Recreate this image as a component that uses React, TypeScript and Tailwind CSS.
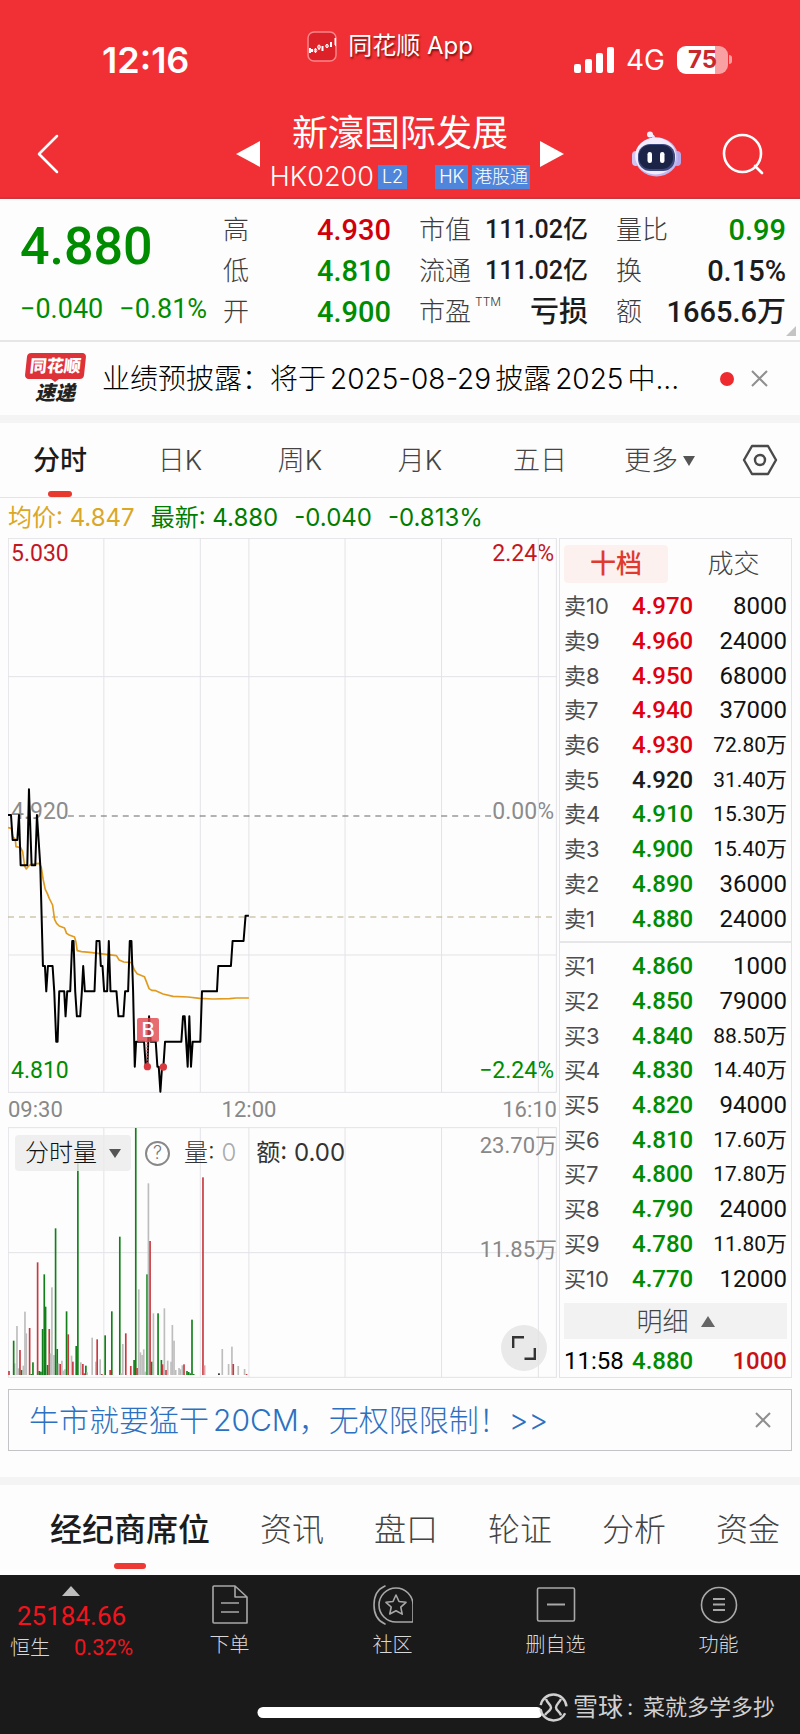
import React from 'react';

const quoteColumns = [
  [
    { label: '高', value: '4.930', color: 'text-[#d0000b]' },
    { label: '低', value: '4.810', color: 'text-[#008c00]' },
    { label: '开', value: '4.900', color: 'text-[#008c00]' },
  ],
  [
    { label: '市值', value: '111.02亿', color: 'text-[#1c1c1c]', small: true },
    { label: '流通', value: '111.02亿', color: 'text-[#1c1c1c]', small: true },
    { label: '市盈', sup: 'TTM', value: '亏损', color: 'text-[#1c1c1c]' },
  ],
  [
    { label: '量比', value: '0.99', color: 'text-[#008c00]' },
    { label: '换', value: '0.15%', color: 'text-[#1c1c1c]' },
    { label: '额', value: '1665.6万', color: 'text-[#1c1c1c]' },
  ],
];

const periods = ['分时', '日K', '周K', '月K', '五日', '更多'];

const sells = [
  ['卖10', '4.970', '8000'],
  ['卖9', '4.960', '24000'],
  ['卖8', '4.950', '68000'],
  ['卖7', '4.940', '37000'],
  ['卖6', '4.930', '72.80万'],
  ['卖5', '4.920', '31.40万'],
  ['卖4', '4.910', '15.30万'],
  ['卖3', '4.900', '15.40万'],
  ['卖2', '4.890', '36000'],
  ['卖1', '4.880', '24000'],
];

const buys = [
  ['买1', '4.860', '1000'],
  ['买2', '4.850', '79000'],
  ['买3', '4.840', '88.50万'],
  ['买4', '4.830', '14.40万'],
  ['买5', '4.820', '94000'],
  ['买6', '4.810', '17.60万'],
  ['买7', '4.800', '17.80万'],
  ['买8', '4.790', '24000'],
  ['买9', '4.780', '11.80万'],
  ['买10', '4.770', '12000'],
];

const priceLine =
  '24,165 33,165 38,240 52,240 57,165 62,316 82,316 87,88 95,316 106,316 111,165 121,316 129,618 135,618 139,694 144,618 158,618 163,694 169,845 173,845 178,694 193,694 197,769 202,694 211,694 217,543 221,543 226,694 231,769 241,769 246,694 250,618 255,694 284,694 290,543 299,543 303,618 308,618 313,694 322,694 327,543 332,694 350,694 356,769 371,769 376,694 385,694 390,543 395,543 400,694 405,920 409,845 433,845 438,920 443,920 448,769 453,845 468,845 473,920 477,920 482,995 487,920 491,920 496,845 545,845 550,769 555,769 564,920 569,769 574,920 579,845 602,845 607,694 652,694 656,618 694,618 699,543 732,543 738,467 748,467';

const averageLine =
  '24,203 34,205 38,230 46,238 48,260 62,263 68,275 74,318 79,327 86,318 95,312 118,310 124,322 130,360 136,388 142,400 148,415 158,435 164,478 170,490 178,498 194,504 200,520 208,525 224,531 228,545 232,572 245,575 270,577 300,581 350,587 358,600 372,606 395,608 404,630 412,641 434,650 448,686 456,691 468,692 490,702 520,709 565,711 600,715 640,717 690,716 710,714 748,714';

// [x, top, colour]
const volumes: [number, number, string][] = [
  [27, 813, 'r'], [44, 790, 'n'], [41, 722, 'g'], [51, 678, 'n'], [55, 805, 'n'], [60, 750, 'r'], [65, 810, 'g'],
  [70, 797, 'n'], [75, 635, 'n'], [79, 700, 'n'], [89, 684, 'r'], [94, 822, 'g'], [99, 787, 'g'], [113, 487, 'r'],
  [118, 813, 'g'], [123, 815, 'g'], [128, 687, 'g'], [137, 620, 'g'], [133, 523, 'g'], [143, 795, 'g'], [148, 687, 'r'],
  [152, 760, 'n'], [156, 562, 'n'], [162, 765, 'n'], [167, 385, 'g'], [172, 747, 'g'], [176, 790, 'n'], [181, 792, 'r'],
  [186, 782, 'n'], [190, 812, 'n'], [195, 808, 'n'], [200, 634, 'g'], [205, 703, 'r'], [215, 767, 'n'], [219, 785, 'r'],
  [229, 738, 'g'], [234, 190, 'g'], [243, 787, 'n'], [249, 792, 'r'], [253, 820, 'r'], [258, 797, 'g'], [262, 817, 'n'],
  [277, 713, 'n'], [288, 785, 'n'], [292, 718, 'r'], [301, 778, 'n'], [306, 822, 'r'], [316, 706, 'g'], [331, 810, 'r'],
  [336, 634, 'g'], [360, 410, 'g'], [364, 820, 'n'], [369, 732, 'n'], [378, 700, 'r'], [393, 798, 'r'], [403, 780, 'g'],
  [408, 84, 'g'], [412, 804, 'r'], [417, 568, 'n'], [422, 757, 'n'], [427, 765, 'n'], [432, 748, 'n'], [436, 815, 'n'],
  [442, 523, 'g'], [446, 250, 'n'], [451, 423, 'r'], [456, 785, 'g'], [461, 640, 'n'], [475, 640, 'g'], [485, 780, 'g'],
  [489, 793, 'r'], [494, 625, 'n'], [499, 810, 'r'], [504, 782, 'n'], [514, 785, 'n'], [518, 675, 'n'], [523, 722, 'n'],
  [528, 810, 'n'], [538, 804, 'n'], [542, 808, 'n'], [548, 796, 'n'], [553, 793, 'r'], [562, 813, 'g'], [567, 816, 'g'],
  [572, 820, 'g'], [577, 659, 'g'], [582, 822, 'g'], [610, 232, 'r'], [615, 796, 'p'], [658, 820, 'k'], [668, 747, 'n'],
  [687, 792, 'n'], [697, 740, 'n'], [701, 792, 'r'], [716, 798, 'n'], [735, 807, 'n'], [741, 822, 'r'],
];

const barColors: Record<string, string> = {
  r: '#c93a40',
  g: '#11801a',
  n: '#bdbdbd',
  p: '#e3a0a4',
  k: '#222222',
};

const gridX = [312, 602, 748, 1037, 1327, 1618];

const priceColor = (price: string) => {
  if (Number(price) > 4.92) return 'text-[#e00010]';
  if (Number(price) < 4.92) return 'text-[#008c00]';
  return 'text-[#1c1c1c]';
};

const StatusBar: React.FC = () => (
  <div className="relative flex h-[111px] items-center justify-between pt-2 pl-[102px] pr-[68px]">
    <span className="text-4xl leading-10 font-semibold">12:16</span>
    <div className="absolute inset-x-0 top-[30px] flex items-center justify-center gap-[10px] pr-5">
      <svg className="size-[31px]" viewBox="0 0 31 31" fill="none">
        <rect x="1" y="1" width="28" height="29" rx="6" fill="#dc2228" stroke="#f7868a" strokeWidth="1.5" />
        <g fill="#fff" stroke="#fff">
          <path d="M3 17v5M5 18v3M15.500 15v5M24 11v5" strokeWidth="2" />
          <path d="M8.500 17v5M12 14v5M20 13v4M28 7v7" strokeWidth="1" />
        </g>
        <ellipse cx="8.500" cy="19.500" rx="1.300" ry="1.800" stroke="#fff" />
        <ellipse cx="12" cy="16" rx="1.300" ry="2" stroke="#fff" />
        <ellipse cx="20" cy="15" rx="1.300" ry="1.600" stroke="#fff" />
        <path d="M28.500 7v8" stroke="#fff" />
      </svg>
      <span className="text-2xl leading-8 font-normal [text-shadow:1px_2px_2px_rgba(80,0,0,0.7)]">同花顺 App</span>
    </div>
    <div className="flex items-center gap-3">
      <svg className="h-[26px] w-[40px]" viewBox="0 0 40 26" fill="#fff">
        <rect x="0" y="17" width="7" height="9" rx="2" />
        <rect x="11" y="12" width="7" height="14" rx="2" />
        <rect x="22" y="6" width="7" height="20" rx="2" />
        <rect x="33" y="0" width="7" height="26" rx="2" />
      </svg>
      <span className="text-[28px] leading-8 font-normal">4G</span>
      <div className="flex items-center gap-px">
        <div className="flex h-7 w-[51px] items-center justify-center rounded-[9px] bg-linear-to-r from-white from-75% to-[#f9a0a3] to-75% text-2xl font-bold text-[#c8282d]">
          75
        </div>
        <span className="h-[9px] w-[3px] rounded-r-full bg-[#f9a0a3]" />
      </div>
    </div>
  </div>
);

const Robot: React.FC = () => (
  <svg className="h-[46px] w-[49px]" viewBox="0 0 49 46">
    <path d="M22 9c0-4-1-5-4-5" stroke="#e6dcf8" strokeWidth="3" fill="none" />
    <circle cx="18" cy="3.500" r="3" fill="#f7eefc" />
    <rect x="0" y="20" width="8" height="15" rx="4" fill="#cfc5f2" />
    <rect x="41" y="20" width="8" height="15" rx="4" fill="#b6a9ea" />
    <ellipse cx="24.500" cy="26" rx="21.500" ry="19.500" fill="#c3b7ef" />
    <ellipse cx="23.500" cy="25" rx="20.500" ry="18.500" fill="#f2ecfc" />
    <rect x="6" y="13" width="37" height="27" rx="12" fill="#3d4a80" />
    <rect x="7" y="14" width="34" height="24" rx="11" fill="#1b2347" />
    <rect x="15.500" y="21" width="4.500" height="11" rx="2.200" fill="#fff" />
    <rect x="28" y="21" width="4.500" height="11" rx="2.200" fill="#fff" />
  </svg>
);

const StockHeader: React.FC = () => (
  <div className="grid h-[88px] grid-cols-[1fr_auto_1fr] items-center border-b-2 border-[#c8383c] px-9">
    <button aria-label="返回" className="justify-self-start">
      <svg className="h-10 w-6" viewBox="0 0 24 40" fill="none" stroke="#fff" strokeWidth="2.500" strokeLinecap="round" strokeLinejoin="round">
        <path d="M21 2 3 20l18 18" />
      </svg>
    </button>
    <div className="flex items-center gap-[10px]">
      <button aria-label="上一只">
        <svg className="h-[26px] w-6" viewBox="0 0 24 26" fill="#fff"><path d="M0 13 24 0v26z" /></svg>
      </button>
      <div className="pb-2">
        <h1 className="text-center text-4xl leading-[44px] font-normal">新濠国际发展</h1>
        <div className="mt-[10px] flex h-6 items-center">
          <span className="text-[27px] leading-6">HK0200</span>
          <span className="ml-1 bg-[#4f86db] px-1 text-lg leading-6">L2</span>
          <span className="ml-7 bg-[#4f86db] px-1 text-lg leading-6">HK</span>
          <span className="ml-1 bg-[#4f86db] px-[2px] text-lg leading-6">港股通</span>
        </div>
      </div>
      <button aria-label="下一只">
        <svg className="h-[26px] w-6" viewBox="0 0 24 26" fill="#fff"><path d="M24 13 0 0v26z" /></svg>
      </button>
    </div>
    <div className="flex items-center gap-[41px] justify-self-end">
      <button aria-label="智能助手"><Robot /></button>
      <button aria-label="搜索">
        <svg className="size-[42px]" viewBox="0 0 42 42" fill="none" stroke="#fff" strokeWidth="2.600" strokeLinecap="round">
          <circle cx="20.500" cy="20.500" r="18.500" />
          <path d="m33 33 7 7" />
        </svg>
      </button>
    </div>
  </div>
);

const QuotePanel: React.FC = () => (
  <section className="relative grid h-[143px] grid-cols-[203fr_196fr_197fr_170fr] border-b-2 border-[#e6e6e6] pl-5 pr-[14px] pt-[10px]">
    <div className="font-[Roboto] font-medium whitespace-nowrap text-[#008c00]">
      <p className="mt-2 text-[52px] leading-[60px]">4.880</p>
      <p className="mt-3 flex gap-4 text-[27px] leading-10 font-normal">
        <span>−0.040</span>
        <span>−0.81%</span>
      </p>
    </div>
    {quoteColumns.map((column, index) => (
      <dl key={index} className="pr-7 last-of-type:pr-0">
        {column.map((item) => (
          <div key={item.label} className="flex h-[41px] items-center justify-between whitespace-nowrap">
            <dt className="flex text-[26px] leading-10 font-light text-[#3c3c3c]">
              {item.label}
              {'sup' in item && <span className="ml-1 text-xs leading-5">TTM</span>}
            </dt>
            <dd
              className={`font-[Roboto,'Noto_Sans_CJK_SC',sans-serif] leading-10 font-medium ${item.color} ${
                'small' in item ? 'text-[25px]' : 'text-[29px]'
              }`}
            >
              {item.value}
            </dd>
          </div>
        ))}
      </dl>
    ))}
    <svg className="absolute right-1 bottom-1 size-[10px]" viewBox="0 0 10 10" fill="#c4c4c4"><path d="M10 0v10H0z" /></svg>
  </section>
);

const NewsBar: React.FC = () => (
  <section className="flex h-[81px] items-center border-b-8 border-[#f4f4f4] pl-6 pr-8">
    <div className="flex w-[62px] flex-col items-center">
      <span className="relative -skew-x-6 rounded-sm bg-[#dd3238] px-1 text-[17px] leading-[26px] font-black text-white">
        同花顺
      </span>
      <svg className="h-[3px] w-2" viewBox="0 0 8 3" fill="#dd3238"><path d="M0 0h8L4 3z" /></svg>
      <span className="text-xl leading-[22px] font-black text-[#222] italic">速递</span>
    </div>
    <a href="#news" className="ml-4 flex-1 truncate text-[28px] leading-10 font-light text-black">
      业绩预披露：将于<span className="mx-1">2025-08-29</span>披露<span className="mx-1">2025</span>中...
    </a>
    <span className="size-[14px] rounded-full bg-[#ee2a2e]" />
    <button aria-label="关闭公告" className="ml-[17px]">
      <svg className="size-[17px]" viewBox="0 0 17 17" stroke="#8f8f8f" strokeWidth="2"><path d="m1 1 15 15M16 1 1 16" /></svg>
    </button>
  </section>
);

const PeriodTabs: React.FC = () => (
  <nav className="flex h-[75px] items-stretch border-b border-[#e2e4ea]">
    {periods.map((period, index) => (
      <button
        key={period}
        className={`relative flex flex-1 items-center justify-center gap-1 pt-[2px] text-[27px] ${
          index === 0 ? 'font-medium text-[#1c1c1c]' : 'font-light text-[#444]'
        }`}
      >
        {period}
        {period === '更多' && (
          <svg className="h-3 w-[14px]" viewBox="0 0 14 12" fill="#555"><path d="M1 1h12L7 11z" /></svg>
        )}
        {index === 0 && <span className="absolute bottom-0 h-[6px] w-6 rounded-full bg-[#e8392f]" />}
      </button>
    ))}
    <button aria-label="设置" className="flex w-[80px] items-center justify-center">
      <svg className="h-8 w-9" viewBox="0 0 36 32" fill="none" stroke="#4a4a4a" strokeWidth="2.400" strokeLinejoin="round">
        <path d="M10 2h16l8 14-8 14H10L2 16z" />
        <circle cx="18" cy="16" r="5" />
      </svg>
    </button>
  </nav>
);

const PriceChart: React.FC = () => (
  <div className="relative h-[555px] font-[Roboto] text-[23px] leading-7">
    <span className="absolute top-[2px] left-[3px] text-[#c4161e]">5.030</span>
    <span className="absolute top-[2px] right-[3px] text-[#c4161e]">2.24%</span>
    <span className="absolute top-[260px] left-[3px] text-[#8c8c8c]">4.920</span>
    <span className="absolute top-[260px] right-[3px] text-[#8c8c8c]">0.00%</span>
    <span className="absolute bottom-2 left-[3px] text-[#008c00]">4.810</span>
    <span className="absolute right-[3px] bottom-2 text-[#008c00]">−2.24%</span>
    <svg className="absolute inset-0 size-full" viewBox="24 -666 1650 1665" preserveAspectRatio="none" fill="none">
      <g stroke="#e3e3e8" strokeWidth="3">
        <rect x="25" y="-665" width="1647" height="1662" />
        {gridX.map((x) => (
          <path key={x} d={`M${x}-666V998`} />
        ))}
        <path d="M24-250H1674M24 585H1674" />
      </g>
      <path d="M204 168H1480" stroke="#666" strokeWidth="3" strokeDasharray="18 15" />
      <path d="M24 471H1674" stroke="#b9ab84" strokeWidth="3" strokeDasharray="18 15" />
      <polyline points={averageLine} stroke="#e09b1f" strokeWidth="5" strokeLinejoin="round" />
      <polyline points={priceLine} stroke="#000" strokeWidth="6" strokeLinejoin="round" />
      <path d="M443 843v77" stroke="#cf3238" strokeWidth="5" strokeDasharray="5 4" />
      <circle cx="443" cy="920" r="11" fill="#d8393f" />
      <circle cx="491" cy="921" r="11" fill="#d8393f" />
    </svg>
    <span className="absolute top-[480px] left-[23.5%] flex h-6 w-[22px] items-center justify-center rounded-xs bg-[#e0474d]/80 font-[Inter] text-xl font-medium text-white">
      B
    </span>
  </div>
);

const VolumeChart: React.FC = () => (
  <div className="relative h-[251px]">
    <svg className="absolute inset-0 size-full" viewBox="24 81 1650 753" preserveAspectRatio="none" fill="none">
      <g stroke="#e3e3e8" strokeWidth="3">
        <rect x="25" y="83" width="1647" height="749" />
        {gridX.map((x) => (
          <path key={x} d={`M${x} 82V832`} />
        ))}
        <path d="M24 458H1674" />
      </g>
      {volumes.map(([x, top, color]) => (
        <rect key={x} x={x - 2.5} y={top} width="5" height={825 - top} fill={barColors[color]} />
      ))}
    </svg>
    <div className="relative flex items-center pt-2 pl-[7px] text-2xl leading-9 font-light text-[#333]">
      <button className="flex items-center gap-3 rounded-sm bg-[#ebebeb]/80 px-[10px] text-[#111]">
        分时量
        <svg className="h-[9px] w-3" viewBox="0 0 12 9" fill="#555"><path d="M0 0h12L6 9z" /></svg>
      </button>
      <button aria-label="说明" className="ml-[14px] flex size-[25px] items-center justify-center rounded-full border-2 border-[#888] text-lg text-[#777]">
        ?
      </button>
      <span className="ml-[14px]">量: <span className="text-[#aaa]">0</span></span>
      <span className="ml-5 font-normal">额: 0.00</span>
    </div>
    <span className="absolute top-[5px] right-0 font-[Roboto,'Noto_Sans_CJK_SC',sans-serif] text-[22px] leading-7 text-[#888]">23.70万</span>
    <span className="absolute top-[109px] right-0 font-[Roboto,'Noto_Sans_CJK_SC',sans-serif] text-[22px] leading-7 text-[#888]">11.85万</span>
    <button aria-label="全屏" className="absolute right-[10px] bottom-[7px] flex size-[46px] items-center justify-center rounded-full bg-[#e4e4e4]/80">
      <svg className="size-6" viewBox="0 0 24 24" fill="none" stroke="#333" strokeWidth="2.400">
        <path d="M1.200 12V1.200H12M12.500 22.800h10.300V12" />
      </svg>
    </button>
  </div>
);

const BookTable: React.FC<{ rows: string[][]; label: string }> = ({ rows, label }) => (
  <table aria-label={label} className="h-[347px] w-full font-[Roboto,'Noto_Sans_CJK_SC',sans-serif]">
    <tbody>
      {rows.map(([name, price, amount]) => (
        <tr key={name}>
          <td className="w-[68px] p-0 font-[Inter,'Noto_Sans_CJK_SC',sans-serif] text-[22px] leading-8 text-[#4d4d4d]">{name}</td>
          <td className={`p-0 text-2xl leading-8 font-medium ${priceColor(price)}`}>{price}</td>
          <td className={`p-0 text-right leading-8 text-[#111] ${amount.endsWith('万') ? 'text-[21px]' : 'text-2xl'}`}>{amount}</td>
        </tr>
      ))}
    </tbody>
  </table>
);

const OrderBook: React.FC = () => (
  <aside className="flex w-[233px] shrink-0 flex-col border border-[#e3e3e8] pt-[6px]">
    <div className="flex h-[38px] px-1 text-[26px] leading-[38px]">
      <button className="w-[104px] rounded-sm bg-[#fdf1f0] font-medium text-[#e03a2f]">十档</button>
      <button className="flex-1 pl-3 font-light text-[#444]">成交</button>
    </div>
    <div className="mt-[6px] px-1">
      <BookTable rows={sells} label="卖盘" />
    </div>
    <div className="mt-[5px] border-t-2 border-[#e6e6e9] px-1 pt-[6px]">
      <BookTable rows={buys} label="买盘" />
    </div>
    <button className="mx-1 mt-[7px] flex h-9 items-center justify-center gap-3 bg-[#f2f2f2] text-[26px] font-light text-[#444]">
      明细
      <svg className="h-[11px] w-[14px]" viewBox="0 0 14 11" fill="#666"><path d="M7 0 14 11H0z" /></svg>
    </button>
    <div className="flex flex-1 items-end px-1 font-[Roboto] text-2xl leading-8">
      <span className="w-[68px]">11:58</span>
      <span className="font-medium text-[#008c00]">4.880</span>
      <span className="ml-auto font-medium text-[#c8101a]">1000</span>
    </div>
  </aside>
);

const sections = ['经纪商席位', '资讯', '盘口', '轮证', '分析', '资金'];

const BottomNav: React.FC = () => (
  <footer className="relative h-[159px] bg-[#1a1a1a] font-light text-[#d8d8d8]">
    <nav className="flex">
      <button className="flex w-[148px] flex-col items-start pt-[11px] pl-[10px] whitespace-nowrap">
        <svg className="ml-[52px] h-[10px] w-[18px]" viewBox="0 0 18 10" fill="#bdbdbd"><path d="M9 0l9 10H0z" /></svg>
        <span className="ml-[7px] mt-1 font-[Roboto] text-[26px] leading-8 font-normal text-[#f0141e]">25184.66</span>
        <span className="flex w-[123px] items-center justify-between text-xl leading-8">
          恒生
          <span className="font-[Roboto] text-[22px] font-normal text-[#f0141e]">0.32%</span>
        </span>
      </button>
      <button className="flex flex-1 flex-col items-center pt-[10px]">
        <svg className="size-10" viewBox="0 0 40 40" fill="none" stroke="#a8a8a8" strokeWidth="1.600" strokeLinejoin="round">
          <path d="M4 1h21l12 11v26H4a1 1 0 0 1-1-1V2a1 1 0 0 1 1-1ZM25 1v11h12M11 18h18M11 27h18" />
        </svg>
        <span className="mt-1 text-xl leading-8">下单</span>
      </button>
      <button className="flex flex-1 flex-col items-center pt-[10px]">
        <svg className="size-10" viewBox="0 0 40 40" fill="none" stroke="#a8a8a8" strokeWidth="1.600" strokeLinejoin="round" strokeLinecap="round">
          <path d="M12 1C5 4 1 11 1 20s4 16 11 19" />
          <path d="M23 3a17 17 0 1 0 0 34h16a1 1 0 0 0 1-1V20A17 17 0 0 0 23 3Z" />
          <path d="m23 10 3 6.500 7 .8-5.200 4.800 1.400 7L23 25.700 16.800 29l1.400-7L13 17.300l7-.8z" />
        </svg>
        <span className="mt-1 text-xl leading-8">社区</span>
      </button>
      <button className="flex flex-1 flex-col items-center pt-[10px]">
        <svg className="size-10" viewBox="0 0 40 40" fill="none" stroke="#a8a8a8" strokeWidth="1.600">
          <rect x="1.500" y="3" width="37" height="33" rx="1.500" />
          <path d="M11 19.500h18" strokeWidth="2" />
        </svg>
        <span className="mt-1 text-xl leading-8">删自选</span>
      </button>
      <button className="flex flex-1 flex-col items-center pt-[10px]">
        <svg className="size-10" viewBox="0 0 40 40" fill="none" stroke="#a8a8a8" strokeWidth="1.600">
          <circle cx="20" cy="20" r="17.500" />
          <path d="M14 14h12M14 19.500h12M14 25h12" strokeWidth="2" />
        </svg>
        <span className="mt-1 text-xl leading-8">功能</span>
      </button>
    </nav>
    <span className="absolute bottom-4 left-1/2 h-[11px] w-[285px] -translate-x-1/2 rounded-full bg-white" />
    <div className="absolute right-[25px] bottom-[11px] flex items-center gap-[5px] leading-8 text-[#d0d0d0]">
      <svg className="size-[29px]" viewBox="0 0 29 29" fill="none" stroke="#d0d0d0" strokeWidth="2.400">
        <circle cx="14.500" cy="14.500" r="13" strokeDasharray="33 4 37 8" fill="#1a1a1a" strokeDashoffset="-6" />
        <path d="M7 6c1 4 5 5.500 5 8.500S8 19 6 22M22 6c-2 4-5 5.500-5 8.500s4 4 5 8" />
      </svg>
      <span className="flex items-center">
        <span className="text-[25px] font-normal">雪球</span>
        <span className="w-5 pl-1 text-[22px] font-normal">:</span>
        <span className="text-[22px] font-normal">菜就多学多抄</span>
      </span>
    </div>
  </footer>
);

const App: React.FC = () => {
  return (
    <div className="w-full overflow-hidden bg-[#fdfdfd] font-[Inter,'Noto_Sans_CJK_SC',sans-serif]">
      <header className="bg-[#f03034] font-light text-white">
        <StatusBar />
        <StockHeader />
      </header>
      <main>
        <QuotePanel />
        <NewsBar />
        <PeriodTabs />
        <p className="flex h-10 items-center gap-4 px-2 text-2xl text-[#007d00]">
          <span className="text-[#dba726]">均价: 4.847</span>
          <span>最新: 4.880</span>
          <span>-0.040</span>
          <span>-0.813%</span>
        </p>
        <div className="flex gap-[2px] px-2">
          <div className="min-w-0 flex-1">
            <PriceChart />
            <div className="relative flex h-[34px] items-center justify-between font-[Roboto] text-[22px] leading-7 text-[#888]">
              <span>09:30</span>
              <span className="absolute left-[43.9%] -translate-x-1/2">12:00</span>
              <span>16:10</span>
            </div>
            <VolumeChart />
          </div>
          <OrderBook />
        </div>
        <div className="mx-2 mt-[11px] flex h-[62px] items-center justify-between border border-[#c4c4c8] px-5">
          <a href="#promo" className="text-[30px] leading-10 font-light text-[#2c71c1]">
            牛市就要猛干<span className="ml-1">20CM</span>，无权限限制！&gt;&gt;
          </a>
          <button aria-label="关闭广告">
            <svg className="size-4" viewBox="0 0 16 16" stroke="#8f8f8f" strokeWidth="2"><path d="m1 1 14 14M15 1 1 15" /></svg>
          </button>
        </div>
        <nav className="mt-[26px] flex h-[98px] gap-[50px] border-t-8 border-[#f4f4f4] pl-[50px] whitespace-nowrap">
          {sections.map((section, index) => (
            <button
              key={section}
              className={`relative flex shrink-0 items-center justify-center text-[32px] ${
                index === 0 ? 'font-medium text-[#1c1c1c]' : 'font-light text-[#444]'
              }`}
            >
              {section}
              {index === 0 && <span className="absolute bottom-[6px] h-[6px] w-8 rounded-full bg-[#ee3a34]" />}
            </button>
          ))}
        </nav>
      </main>
      <BottomNav />
    </div>
  );
};

export default App;
